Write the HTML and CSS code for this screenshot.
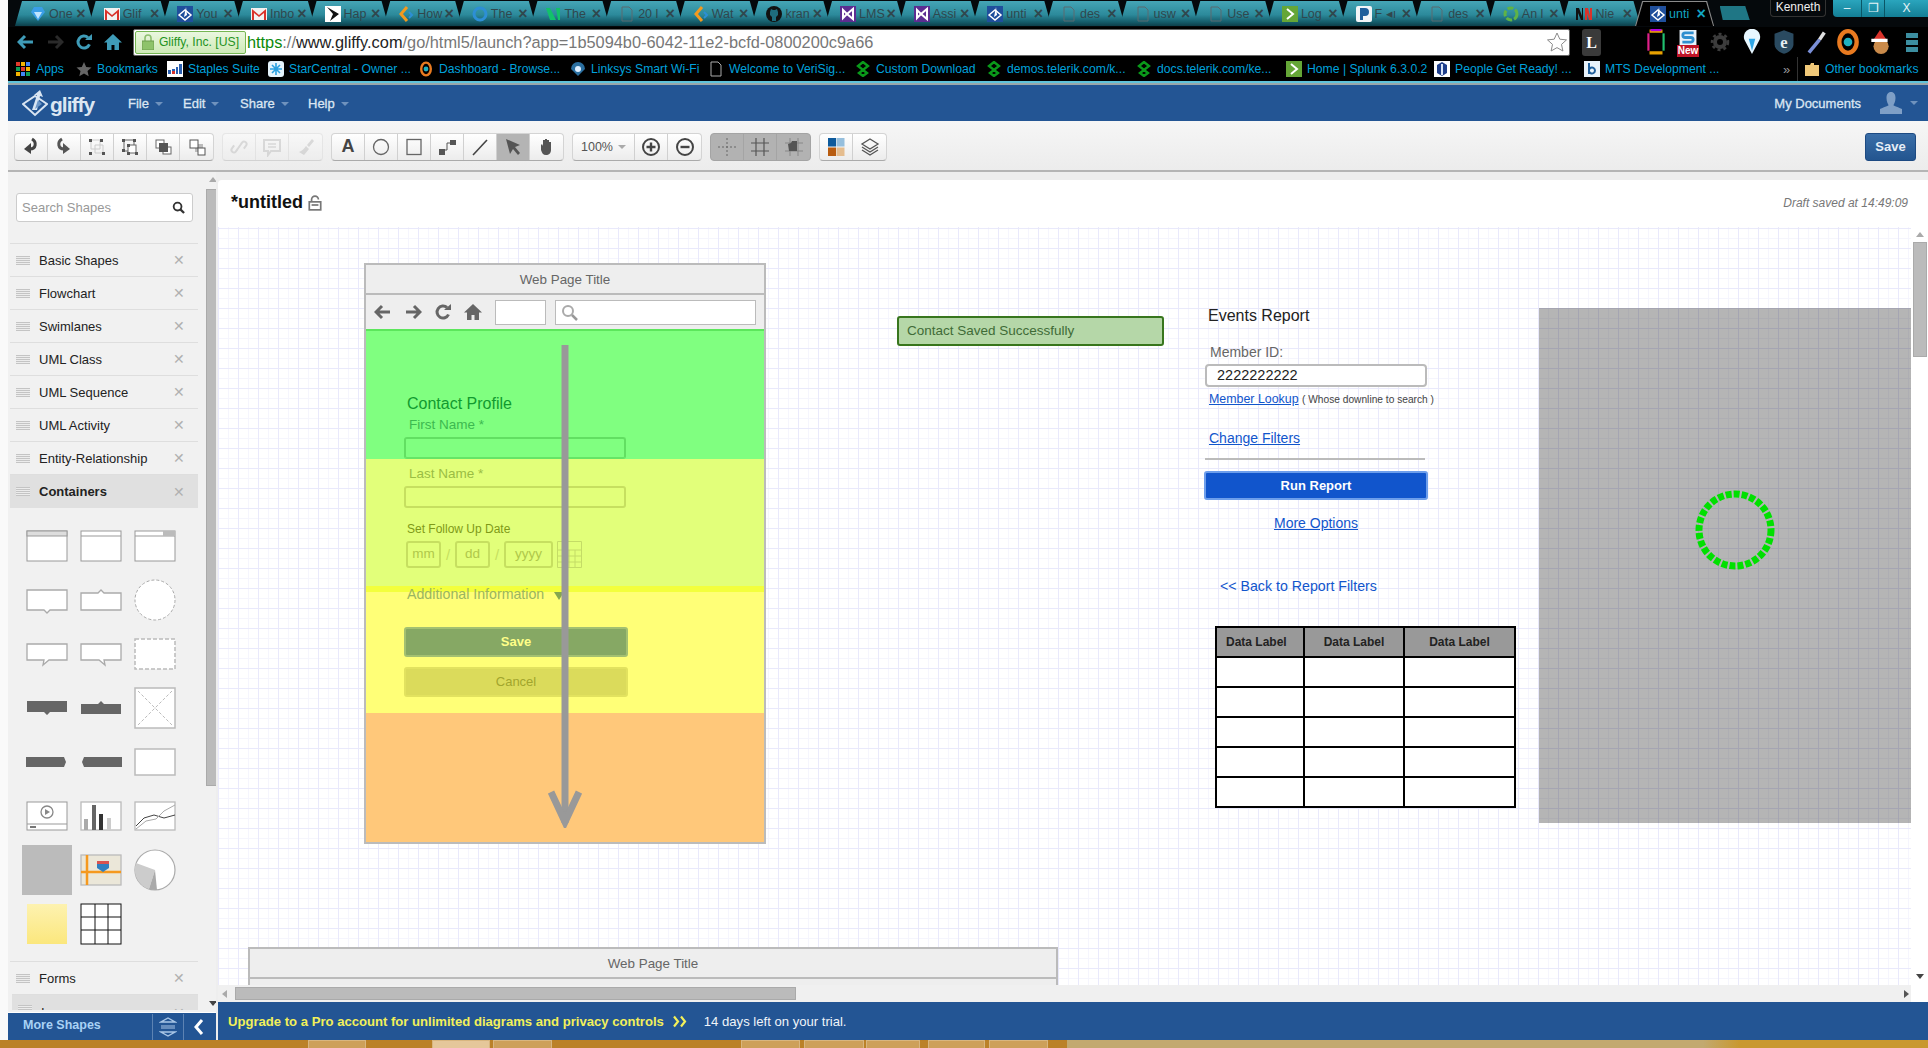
FILE: index.html
```html
<!DOCTYPE html>
<html lang="en">
<head>
    <meta charset="UTF-8">
    <title>Gliffy</title>
    <link rel="stylesheet" href="styles.css">
</head>
<body>
    <!-- icons used more than once -->
    <svg class="defs" width="0" height="0">
        <symbol id="i-gliffy" viewBox="0 0 16 16"><rect width="16" height="16" fill="#1f4f9c"/><path d="M2 9l6-5 6 5-6 5z" fill="none" stroke="#fff" stroke-width="1.5"/><path d="M7 11l2-10 1 8z" fill="#fff"/></symbol>
        <symbol id="i-gmail" viewBox="0 0 16 16"><rect y="2" width="16" height="12" fill="#f2f2f2"/><path d="M1 14V3l7 6 7-6v11h-2V7L8 11 3 7v7z" fill="#d9332b"/></symbol>
        <symbol id="i-doc" viewBox="0 0 16 16"><path d="M3 1h7l3 3v11H3z" fill="none" stroke="#5a6a70"/></symbol>
        <symbol id="i-code" viewBox="0 0 16 16"><path d="M9 1L3 8l6 7" fill="none" stroke="#f29a1f" stroke-width="3"/><path d="M11 6l3 3-3 3" fill="none" stroke="#2d8fd5" stroke-width="2"/></symbol>
        <symbol id="i-vs" viewBox="0 0 16 16"><rect width="16" height="16" fill="#5c2d91"/><path d="M3 4l4 4-4 4zM13 3v10L7 8z" fill="none" stroke="#fff" stroke-width="2"/></symbol>
        <symbol id="i-telerik" viewBox="0 0 16 16"><path d="M8 1L3 5l5 4 5-4zM8 9l-4 3 4 3 4-3z" fill="none" stroke="#0a9a1a" stroke-width="2.4"/></symbol>
        <symbol id="i-splunk" viewBox="0 0 16 16"><rect width="16" height="16" fill="#65a637"/><path d="M5 3l6 5-6 5" fill="none" stroke="#fff" stroke-width="2"/></symbol>
        <symbol id="i-back" viewBox="0 0 18 18"><path d="M8 3L2 9l6 6M2 9h14" fill="none" stroke="currentColor" stroke-width="3"/></symbol>
        <symbol id="i-fwd" viewBox="0 0 18 18"><path d="M10 3l6 6-6 6M16 9H2" fill="none" stroke="currentColor" stroke-width="3"/></symbol>
        <symbol id="i-reload" viewBox="0 0 18 18"><path d="M14.5 11.5A6 6 0 1 1 13 4.5" fill="none" stroke="currentColor" stroke-width="3"/><path d="M10 7h7V1z" fill="currentColor"/></symbol>
        <symbol id="i-home" viewBox="0 0 18 18"><path d="M9 1L0 9.5h3V17h4.500v-5h3v5H15V9.500h3z" fill="currentColor"/></symbol>
    </svg>

    <div class="window">
        <div class="tabstrip">
            <div class="tabs">
                <div class="tab"><svg class="fav" viewBox="0 0 16 16"><path d="M8 15L1 6l3-5h8l3 5z" fill="#3a9fe8"/><path d="M4 6h8L8 13z" fill="#bfe4ff"/></svg><span class="tab-name">One</span><span class="tab-x">×</span></div>
                <div class="tab"><svg class="fav"><use href="#i-gmail"/></svg><span class="tab-name">Glif</span><span class="tab-x">×</span></div>
                <div class="tab"><svg class="fav"><use href="#i-gliffy"/></svg><span class="tab-name">You</span><span class="tab-x">×</span></div>
                <div class="tab"><svg class="fav"><use href="#i-gmail"/></svg><span class="tab-name">Inbo</span><span class="tab-x">×</span></div>
                <div class="tab"><svg class="fav" viewBox="0 0 16 16"><rect width="16" height="16" fill="#fff"/><path d="M2 1l12 7-9 7 3-7z" fill="#111"/></svg><span class="tab-name">Hap</span><span class="tab-x">×</span></div>
                <div class="tab"><svg class="fav"><use href="#i-code"/></svg><span class="tab-name">How</span><span class="tab-x">×</span></div>
                <div class="tab"><svg class="fav" viewBox="0 0 16 16"><circle cx="8" cy="8" r="6" fill="none" stroke="#2d8fd5" stroke-width="3"/></svg><span class="tab-name">The</span><span class="tab-x">×</span></div>
                <div class="tab"><svg class="fav" viewBox="0 0 16 16"><path d="M1 2h4l6 12H5zM11 2h4v12h-2z" fill="#12c26a"/></svg><span class="tab-name">The</span><span class="tab-x">×</span></div>
                <div class="tab"><svg class="fav"><use href="#i-doc"/></svg><span class="tab-name">20 l</span><span class="tab-x">×</span></div>
                <div class="tab"><svg class="fav"><use href="#i-code"/></svg><span class="tab-name">Wat</span><span class="tab-x">×</span></div>
                <div class="tab"><svg class="fav" viewBox="0 0 16 16"><circle cx="8" cy="8" r="8" fill="#111"/><path d="M4 6l1-3 2 1h2l2-1 1 3v3l-2 2v4H6v-4L4 9z" fill="#1e6c7d"/></svg><span class="tab-name">kran</span><span class="tab-x">×</span></div>
                <div class="tab"><svg class="fav"><use href="#i-vs"/></svg><span class="tab-name">LMS</span><span class="tab-x">×</span></div>
                <div class="tab"><svg class="fav"><use href="#i-vs"/></svg><span class="tab-name">Assi</span><span class="tab-x">×</span></div>
                <div class="tab"><svg class="fav"><use href="#i-gliffy"/></svg><span class="tab-name">unti</span><span class="tab-x">×</span></div>
                <div class="tab"><svg class="fav"><use href="#i-doc"/></svg><span class="tab-name">des</span><span class="tab-x">×</span></div>
                <div class="tab"><svg class="fav"><use href="#i-doc"/></svg><span class="tab-name">usw</span><span class="tab-x">×</span></div>
                <div class="tab"><svg class="fav"><use href="#i-doc"/></svg><span class="tab-name">Use</span><span class="tab-x">×</span></div>
                <div class="tab"><svg class="fav"><use href="#i-splunk"/></svg><span class="tab-name">Log</span><span class="tab-x">×</span></div>
                <div class="tab"><svg class="fav" viewBox="0 0 16 16"><rect width="16" height="16" rx="2" fill="#f2f5f8"/><path d="M4 14V2h5a3.500 3.500 0 0 1 0 8H7v4z" fill="#1f5f9c"/></svg><span class="tab-name">F ◂ı</span><span class="tab-x">×</span></div>
                <div class="tab"><svg class="fav"><use href="#i-doc"/></svg><span class="tab-name">des</span><span class="tab-x">×</span></div>
                <div class="tab"><svg class="fav" viewBox="0 0 16 16"><circle cx="8" cy="8" r="6" fill="none" stroke="#5fb346" stroke-width="3" stroke-dasharray="6 2"/></svg><span class="tab-name">An l</span><span class="tab-x">×</span></div>
                <div class="tab"><svg class="fav" viewBox="0 0 16 16"><path d="M0 2h3l3 8V2h1v12H5L2 7v7H0z" fill="#111"/><path d="M9 2h3l2 8V2h2v12h-3l-2-7v7H9z" fill="#d9332b"/></svg><span class="tab-name">Nie</span><span class="tab-x">×</span></div>
                <div class="tab tab-active"><svg class="fav"><use href="#i-gliffy"/></svg><span class="tab-name">unti</span><span class="tab-x">×</span></div>
            </div>
            <div class="tab-new"></div>
            <div class="user-chip">Kenneth</div>
            <div class="win-btns">
                <span class="win-btn win-min">–</span>
                <span class="win-btn win-max">❐</span>
                <span class="win-btn win-close">X</span>
            </div>
        </div>

        <div class="addr-row">
            <svg class="nav-ic nav-on"><use href="#i-back"/></svg>
            <svg class="nav-ic nav-off"><use href="#i-fwd"/></svg>
            <svg class="nav-ic nav-on"><use href="#i-reload"/></svg>
            <svg class="nav-ic nav-on"><use href="#i-home"/></svg>
            <div class="addr">
                <div class="sec-chip">
                    <svg class="lock" viewBox="0 0 12 16"><path d="M3 7V4a3 3 0 0 1 6 0v3" fill="none" stroke="#8fbf70" stroke-width="1.600"/><rect y="7" width="12" height="9" fill="#8ec36a" stroke="#6d9e4c"/></svg>
                    <span>Gliffy, Inc. [US]</span>
                </div>
                <div class="url"><span class="url-https">https</span>://<span class="url-host">www.gliffy.com</span>/go/html5/launch?app=1b5094b0-6042-11e2-bcfd-0800200c9a66</div>
                <svg class="url-star" viewBox="0 0 20 20"><path d="M10 1l2.800 6.200 6.700.7-5 4.500 1.400 6.600L10 15.600 4.100 19l1.400-6.600-5-4.500 6.700-.7z" fill="#fff" stroke="#8a8a8a"/></svg>
            </div>
            <span class="ext-l">L</span>
            <div class="exts">
                <svg class="ext" viewBox="0 0 18 24"><path d="M3 2h12M3 22h12" stroke="#e8a100" stroke-width="3"/><path d="M4 1h10" stroke="#b400e0" stroke-width="2"/><path d="M2 4v16" stroke="#e0208a" stroke-width="2"/><path d="M16 4v16" stroke="#20c070" stroke-width="2"/></svg>
                <div class="ext-new"><svg viewBox="0 0 18 16"><rect width="18" height="16" fill="#e8f2fa"/><path d="M15 3H6a2.500 2.500 0 0 0 0 5h6a2.500 2.500 0 0 1 0 5H3" fill="none" stroke="#2f8fd0" stroke-width="3"/></svg><span>New</span></div>
                <svg class="ext" viewBox="-4 -4 26 26"><circle cx="9" cy="9" r="5" fill="none" stroke="#3c3c3c" stroke-width="4"/><circle cx="9" cy="9" r="8" fill="none" stroke="#3c3c3c" stroke-width="2.500" stroke-dasharray="3 3"/></svg>
                <svg class="ext" viewBox="0 0 18 24"><path d="M9 23L2 10a7.500 7.500 0 1 1 14 0z" fill="#e8f7ff"/><path d="M9 20L6 9h6z" fill="#2fa6e6"/></svg>
                <svg class="ext" viewBox="0 0 18 22"><path d="M9 1l8 3v9c0 4-4 7-8 8-4-1-8-4-8-8V4z" fill="#2a4a60"/><text x="9" y="16" class="ext-e">e</text></svg>
                <svg class="ext" viewBox="0 0 18 22"><path d="M3 20l9-11" stroke="#7a8fd8" stroke-width="3"/><path d="M12 9l4-6" stroke="#e0e0e0" stroke-width="3"/></svg>
                <svg class="ext" viewBox="0 0 20 24"><ellipse cx="10" cy="12" rx="8" ry="10" fill="none" stroke="#e87a20" stroke-width="4"/><circle cx="10" cy="12" r="4" fill="#1fb0c0"/></svg>
                <svg class="ext" viewBox="0 0 20 24"><path d="M4 10L10 1l6 9z" fill="#d9332b"/><circle cx="11" cy="16" r="7" fill="#c98a4a"/><rect x="2" y="9" width="15" height="3" fill="#fff"/></svg>
                <div class="ext-menu"><i></i><i></i><i></i></div>
            </div>
        </div>

        <div class="bookmarks">
            <span class="bm"><svg class="apps-ic" viewBox="0 0 14 14"><path d="M0 0h4v4H0z" fill="#e0392b"/><path d="M5 0h4v4H5z" fill="#f4b400"/><path d="M10 0h4v4h-4z" fill="#4285f4"/><path d="M0 5h4v4H0z" fill="#0f9d58"/><path d="M5 5h4v4H5z" fill="#e0392b"/><path d="M10 5h4v4h-4z" fill="#f4b400"/><path d="M0 10h4v4H0z" fill="#f4b400"/><path d="M5 10h4v4H5z" fill="#4285f4"/><path d="M10 10h4v4h-4z" fill="#0f9d58"/></svg>Apps</span>
            <span class="bm"><svg class="bm-ic" viewBox="0 0 16 16"><path d="M8 1l2.200 5 5.300.5-4 3.600 1.200 5.200L8 12.600l-4.700 2.700 1.200-5.200-4-3.600L5.800 6z" fill="#666"/></svg>Bookmarks</span>
            <span class="bm"><svg class="bm-ic" viewBox="0 0 16 16"><rect width="16" height="16" fill="#fff"/><path d="M1 13V9h3v4zM5 13V8h3v5zM9 13V6h2v7zM12 13V3h3v10z" fill="#2a5fb0"/><path d="M5 13V10h3v3z" fill="#d9332b"/></svg>Staples Suite</span>
            <span class="bm"><svg class="bm-ic" viewBox="0 0 16 16"><rect width="16" height="16" rx="3" fill="#e6f4fc"/><path d="M8 2v12M2 8h12M4 4l8 8M12 4l-8 8" stroke="#2aa0e0" stroke-width="1.600"/></svg>StarCentral - Owner ...</span>
            <span class="bm"><svg class="bm-ic" viewBox="0 0 16 20"><ellipse cx="8" cy="10" rx="6" ry="8" fill="none" stroke="#e87a20" stroke-width="3"/><circle cx="8" cy="10" r="3" fill="#1fb0c0"/></svg>Dashboard - Browse...</span>
            <span class="bm"><svg class="bm-ic" viewBox="0 0 16 16"><path d="M1 8a7 7 0 0 1 14 0l-7 7z" fill="#2a6fa0"/><circle cx="8" cy="8" r="3" fill="#dfefff"/></svg>Linksys Smart Wi-Fi</span>
            <span class="bm"><svg class="bm-ic" viewBox="0 0 16 16"><path d="M3 1h7l3 3v11H3z" fill="none" stroke="#aaa"/></svg>Welcome to VeriSig...</span>
            <span class="bm"><svg class="bm-ic"><use href="#i-telerik"/></svg>Custom Download</span>
            <span class="bm"><svg class="bm-ic"><use href="#i-telerik"/></svg>demos.telerik.com/k...</span>
            <span class="bm"><svg class="bm-ic"><use href="#i-telerik"/></svg>docs.telerik.com/ke...</span>
            <span class="bm"><svg class="bm-ic"><use href="#i-splunk"/></svg>Home | Splunk 6.3.0.2</span>
            <span class="bm"><svg class="bm-ic" viewBox="0 0 16 16"><rect width="16" height="16" fill="#fff"/><path d="M3 4l5-3 5 3v8l-5 3-5-3z" fill="#1f3f8c"/><path d="M7 3h2v11H7z" fill="#d8e4f8"/></svg>People Get Ready! ...</span>
            <span class="bm"><svg class="bm-ic" viewBox="0 0 16 16"><rect width="16" height="16" fill="#e8f2fa"/><path d="M5 2v11M5 9a3 3 0 1 1 0 1" fill="none" stroke="#1f5f9c" stroke-width="2"/></svg>MTS Development ...</span>
            <span class="bm-more">»</span>
            <span class="bm bm-other"><svg class="bm-ic" viewBox="0 0 16 16"><path d="M1 4h5l1-2h3v2h5v11H1z" fill="#f0c878"/></svg>Other bookmarks</span>
        </div>
        <div class="chrome-line"></div>

        <header class="topbar">
            <div class="logo">
                <svg class="logo-mark" viewBox="0 0 26 28"><path d="M1 15L13 7l12 8-12 11z" fill="none" stroke="#d9e5f2" stroke-width="2"/><path d="M10 21L15 6l-3 0 6-5 3 7-3-1-3 14z" fill="#d9e5f2"/><path d="M13 20l3-9 4 4z" fill="#6d97c7"/></svg>
                <span class="logo-text">gliffy</span>
            </div>
            <nav class="menu">
                <span class="menu-item menu-file">File</span>
                <span class="menu-item menu-edit">Edit</span>
                <span class="menu-item menu-share">Share</span>
                <span class="menu-item">Help</span>
            </nav>
            <span class="my-docs">My Documents</span>
            <svg class="avatar" viewBox="0 0 22 24"><path d="M11 1c3 0 4.500 2.500 4.500 6s-1.500 6-2 7 6 2.500 8.500 4v5H0v-5c2.500-1.500 9-3 8.500-4s-2-3.500-2-7S8 1 11 1z" fill="#7f9fc6"/></svg>
            <span class="caret avatar-caret"></span>
        </header>

        <div class="toolbar">
            <div class="tb-group">
                <span class="tb-btn"><svg viewBox="0 0 20 20"><path d="M11 2c5 3 4 10-2 10" fill="none" stroke="#444" stroke-width="3"/><path d="M10 6v11l-7-5z" fill="#444"/></svg></span>
                <span class="tb-btn"><svg viewBox="0 0 20 20"><path d="M8 2C3 5 4 12 10 12" fill="none" stroke="#555" stroke-width="3"/><path d="M9 6v11l7-5z" fill="#555"/></svg></span>
                <span class="tb-btn"><svg viewBox="0 0 20 20"><path d="M4 3h9v9H4zM8 8h8v8H8z" fill="none" stroke="#ccc"/><path d="M2 2h3v3H2zM13 2h3v3h-3zM2 15h3v3H2zM15 15h3v3h-3z" fill="#555"/></svg></span>
                <span class="tb-btn"><svg viewBox="0 0 20 20"><path d="M4 3h10v11H4z" fill="none" stroke="#666"/><rect x="8" y="8" width="8" height="8" fill="#fff" stroke="#666"/><path d="M2 2h3v3H2zM13 2h3v3h-3zM2 12h3v3H2zM7 7h3v3H7zM15 15h3v3h-3zM7 15h3v3H7z" fill="#555"/></svg></span>
                <span class="tb-btn"><svg viewBox="0 0 20 20"><rect x="3" y="3" width="8" height="8" fill="#fff" stroke="#666"/><rect x="10" y="10" width="8" height="7" fill="#fff" stroke="#666"/><rect x="6" y="6" width="9" height="9" fill="#555"/></svg></span>
                <span class="tb-btn"><svg viewBox="0 0 20 20"><rect x="8" y="7" width="8" height="8" fill="#bbb"/><rect x="3" y="3" width="8" height="8" fill="#fff" stroke="#555"/><rect x="11" y="11" width="7" height="7" fill="#fff" stroke="#555"/></svg></span>
            </div>
            <div class="tb-group tb-disabled">
                <span class="tb-btn"><svg viewBox="0 0 20 20"><path d="M8 12l-2 2a2.500 2.500 0 0 1-3.500-3.500l3-3M12 8l2-2a2.500 2.500 0 0 1 3.500 3.500l-3 3M7 13l6-6" fill="none" stroke="#888" stroke-width="2" transform="rotate(-10 10 10)"/></svg></span>
                <span class="tb-btn"><svg viewBox="0 0 20 20"><path d="M2 3h16v11h-9l-3 4v-4H2z" fill="none" stroke="#888" stroke-width="2"/><path d="M6 7h8M6 10h8" stroke="#888" stroke-width="1.500"/></svg></span>
                <span class="tb-btn"><svg viewBox="0 0 20 20"><path d="M11 8l5-6 2 2-5 6zM10 9l3 3-5 6-5-3c3-1 5-3 7-6z" fill="#888"/></svg></span>
            </div>
            <div class="tb-group">
                <span class="tb-btn tb-letter">A</span>
                <span class="tb-btn"><svg viewBox="0 0 20 20"><circle cx="10" cy="10" r="7.500" fill="none" stroke="#666" stroke-width="1.300"/></svg></span>
                <span class="tb-btn"><svg viewBox="0 0 20 20"><rect x="3" y="2.500" width="14" height="15" fill="none" stroke="#666" stroke-width="1.300"/></svg></span>
                <span class="tb-btn"><svg viewBox="0 0 20 20"><path d="M2 12h6v6H2zM13 3h6v5h-6z" fill="#555"/><path d="M5 13h5V6h4" fill="none" stroke="#555"/></svg></span>
                <span class="tb-btn"><svg viewBox="0 0 20 20"><path d="M3 18L17 3" stroke="#444" stroke-width="1.600"/></svg></span>
                <span class="tb-btn tb-on"><svg viewBox="0 0 20 20"><path d="M3 2l14 6-5 2 5 6-2 2-5-6-3 5z" fill="#555"/></svg></span>
                <span class="tb-btn"><svg viewBox="0 0 20 20"><path d="M4 8l1-1 1 2V3h2v5V2h2v6-5h2v6V5h2v8c0 3-2 5-5 5-3 0-4-2-5-5z" fill="#555"/></svg></span>
            </div>
            <div class="tb-group">
                <span class="tb-btn tb-zoom">100%<span class="caret zoom-caret"></span></span>
                <span class="tb-btn"><svg viewBox="0 0 20 20"><circle cx="10" cy="10" r="8" fill="none" stroke="#444" stroke-width="2"/><path d="M5.500 10h9M10 5.500v9" stroke="#444" stroke-width="2.400"/></svg></span>
                <span class="tb-btn"><svg viewBox="0 0 20 20"><circle cx="10" cy="10" r="8" fill="none" stroke="#444" stroke-width="2"/><path d="M5.500 10h9" stroke="#444" stroke-width="2.400"/></svg></span>
            </div>
            <div class="tb-group tb-dark">
                <span class="tb-btn"><svg viewBox="0 0 20 20"><path d="M1 10h18M10 1v18" stroke="#666" stroke-dasharray="2 2"/></svg></span>
                <span class="tb-btn"><svg viewBox="0 0 20 20"><path d="M1 6h18M1 14h18M6 1v18M14 1v18" stroke="#555" stroke-width="1.200"/></svg></span>
                <span class="tb-btn"><svg viewBox="0 0 20 20"><path d="M1 6h18M1 14h18M6 1v18M14 1v18" stroke="#888"/><path d="M4 7l3-1 1-2h5v10H5z" fill="#555"/></svg></span>
            </div>
            <div class="tb-group">
                <span class="tb-btn"><svg viewBox="0 0 20 20"><rect x="2" y="1" width="8" height="8.500" fill="#0d5a9c"/><rect x="10.500" y="1" width="8" height="8.500" fill="#96bfdd"/><rect x="2" y="10.500" width="8" height="8.500" fill="#b85c10"/><rect x="10.500" y="10.500" width="8" height="8.500" fill="#e5bd8f"/></svg></span>
                <span class="tb-btn"><svg viewBox="0 0 20 20"><path d="M10 2l8 5-8 5-8-5zM2 10l8 5 8-5M2 13l8 5 8-5" fill="none" stroke="#555" stroke-width="1.300"/></svg></span>
            </div>
            <button class="save-btn">Save</button>
        </div>

        <div class="workspace">
            <aside class="sidebar">
                <div class="side-panel">
                    <div class="side-list">
                        <div class="search">
                            <span>Search Shapes</span>
                            <svg viewBox="0 0 14 14"><circle cx="6" cy="6" r="4.200" fill="none" stroke="#333" stroke-width="2"/><path d="M9 9l4 4" stroke="#333" stroke-width="2.400"/></svg>
                        </div>
                        <div class="lib-row"><span class="grip"></span>Basic Shapes<span class="lib-x">✕</span></div>
                        <div class="lib-row"><span class="grip"></span>Flowchart<span class="lib-x">✕</span></div>
                        <div class="lib-row"><span class="grip"></span>Swimlanes<span class="lib-x">✕</span></div>
                        <div class="lib-row"><span class="grip"></span>UML Class<span class="lib-x">✕</span></div>
                        <div class="lib-row"><span class="grip"></span>UML Sequence<span class="lib-x">✕</span></div>
                        <div class="lib-row"><span class="grip"></span>UML Activity<span class="lib-x">✕</span></div>
                        <div class="lib-row"><span class="grip"></span>Entity-Relationship<span class="lib-x">✕</span></div>
                        <div class="lib-row lib-open"><span class="grip"></span>Containers<span class="lib-x">✕</span></div>
                        <div class="shapes">
                            <svg viewBox="0 0 54 54"><rect x="7" y="12" width="40" height="30" fill="#fff" stroke="#999"/><rect x="7" y="12" width="40" height="5" fill="#ddd" stroke="#999"/></svg>
                            <svg viewBox="0 0 54 54"><rect x="7" y="12" width="40" height="30" fill="#fff" stroke="#999"/><path d="M7 17h40" stroke="#999"/></svg>
                            <svg viewBox="0 0 54 54"><rect x="7" y="12" width="40" height="30" fill="#fff" stroke="#999"/><path d="M7 17h40" stroke="#999"/><rect x="35" y="12" width="12" height="5" fill="#bbb"/></svg>
                            <svg viewBox="0 0 54 54"><path d="M7 17h40v20H30l-3 3-3-3H7z" fill="#fff" stroke="#aaa" stroke-width="1.300"/></svg>
                            <svg viewBox="0 0 54 54"><path d="M7 20h17l3-3 3 3h17v17H7z" fill="#fff" stroke="#aaa" stroke-width="1.300"/></svg>
                            <svg viewBox="0 0 54 54"><circle cx="27" cy="27" r="20" fill="#fff" stroke="#aaa" stroke-dasharray="3 2"/></svg>
                            <svg viewBox="0 0 54 54"><path d="M7 17h40v16H29l-6 5 1-5H7z" fill="#fff" stroke="#aaa" stroke-width="1.300"/></svg>
                            <svg viewBox="0 0 54 54"><path d="M7 17h40v16H30l1 5-6-5H7z" fill="#fff" stroke="#aaa" stroke-width="1.300"/></svg>
                            <svg viewBox="0 0 54 54"><rect x="7" y="12" width="40" height="30" fill="#fff" stroke="#bbb" stroke-width="1.500" stroke-dasharray="4 2"/></svg>
                            <svg viewBox="0 0 54 54"><path d="M7 20h40v11H30l-3 3-3-3H7z" fill="#666"/></svg>
                            <svg viewBox="0 0 54 54"><path d="M7 23h17l3-3 3 3h17v10H7z" fill="#666"/></svg>
                            <svg viewBox="0 0 54 54"><rect x="7" y="7" width="40" height="40" fill="#fff" stroke="#bbb" stroke-width="1.500"/><path d="M10 10l34 34M44 10L10 44" stroke="#bbb" stroke-dasharray="3 2"/></svg>
                            <svg viewBox="0 0 54 54"><path d="M6 22h38l2 5-2 5H6z" fill="#666"/></svg>
                            <svg viewBox="0 0 54 54"><path d="M10 22h38v10H10l-2-5z" fill="#666"/></svg>
                            <svg viewBox="0 0 54 54"><rect x="7" y="14" width="40" height="26" fill="#fff" stroke="#bbb" stroke-width="1.500"/></svg>
                            <svg viewBox="0 0 54 54"><rect x="7" y="13" width="40" height="28" fill="#fff" stroke="#999"/><path d="M7 35h40" stroke="#999"/><circle cx="27" cy="23" r="6" fill="none" stroke="#888" stroke-width="1.300"/><path d="M25 20l5 3-5 3z" fill="#888"/><path d="M10 38h6" stroke="#777" stroke-width="2"/></svg>
                            <svg viewBox="0 0 54 54"><rect x="7" y="13" width="40" height="28" fill="#fff" stroke="#bbb" stroke-width="1.300"/><rect x="10" y="30" width="4" height="11" fill="#aaa"/><rect x="18" y="16" width="4" height="25" fill="#666"/><rect x="25" y="25" width="4" height="16" fill="#333"/><rect x="33" y="29" width="4" height="12" fill="#ccc"/></svg>
                            <svg viewBox="0 0 54 54"><rect x="7" y="13" width="40" height="28" fill="#fff" stroke="#bbb" stroke-width="1.300"/><path d="M8 37l8-8 10-3 10 3 11-3" fill="none" stroke="#444"/><path d="M8 40l10-8 10-2 8-8 11-6" fill="none" stroke="#aaa"/></svg>
                            <svg viewBox="0 0 54 54"><rect x="2" y="2" width="50" height="50" fill="#bbb"/></svg>
                            <svg viewBox="0 0 54 54"><rect x="7" y="12" width="40" height="30" fill="#ebe7d9" stroke="#bbb" stroke-width="1.300"/><path d="M13 12v30M7 29h40" stroke="#f5991f" stroke-width="2.500"/><path d="M23 20h12v5l-6 4-6-4z" fill="#2f7fc0"/><rect x="23" y="18" width="12" height="3" fill="#d9534f"/></svg>
                            <svg viewBox="0 0 54 54"><circle cx="27" cy="27" r="20" fill="#fff" stroke="#aaa" stroke-width="1.200"/><path d="M27 27L8 20A20 20 0 0 0 21 46z" fill="#ccc"/><path d="M27 27L21 46A20 20 0 0 0 29 47z" fill="#aaa"/></svg>
                            <svg viewBox="0 0 54 54"><defs><linearGradient id="note" x1="0" y1="0" x2="0" y2="1"><stop offset="0" stop-color="#fdf2b0"/><stop offset="1" stop-color="#fbe77d"/></linearGradient></defs><rect x="7" y="7" width="40" height="40" fill="url(#note)"/></svg>
                            <svg viewBox="0 0 54 54"><rect x="7" y="7" width="40" height="40" fill="#fff" stroke="#111"/><path d="M21 7v40M34 7v40M7 20h40M7 33h40" stroke="#111"/></svg>
                        </div>
                        <div class="lib-row lib-forms"><span class="grip"></span>Forms<span class="lib-x">✕</span></div>
                        <div class="lib-row lib-open lib-cut"><span class="grip"></span>Images<span class="lib-x">✕</span></div>
                    </div>
                    <div class="side-scroll">
                        <span class="arrow-up"></span>
                        <span class="side-thumb"></span>
                        <span class="arrow-down"></span>
                    </div>
                </div>
                <div class="side-foot">
                    <span class="more-shapes">More Shapes</span>
                    <span class="foot-btn"><svg viewBox="0 0 18 20"><path d="M2 9h14M2 11h14" stroke="#a9c6e6" stroke-width="1.200"/><path d="M2 5h14L9 1zM2 15h14l-7 4z" fill="none" stroke="#a9c6e6" stroke-width="1.400"/></svg></span>
                    <span class="foot-btn"><svg viewBox="0 0 18 20"><path d="M12 3l-6 7 6 7" fill="none" stroke="#fff" stroke-width="3"/></svg></span>
                </div>
            </aside>

            <main class="main">
                <div class="doc-head">
                    <span class="doc-title">*untitled</span>
                    <svg class="doc-lock" viewBox="0 0 12 14"><path d="M3 6V4a3 3 0 0 1 6 0" fill="none" stroke="#777" stroke-width="1.500"/><rect x="1" y="6" width="10" height="7" fill="#fff" stroke="#777" stroke-width="1.500"/><rect x="3" y="8" width="6" height="1.500" fill="#777"/></svg>
                    <span class="doc-saved">Draft saved at 14:49:09</span>
                </div>
                <div class="stage">
                    <div class="canvas">
                        <div class="wire wire-main">
                            <div class="wire-title">Web Page Title</div>
                            <div class="wire-bar">
                                <svg class="wire-nav"><use href="#i-back"/></svg>
                                <svg class="wire-nav"><use href="#i-fwd"/></svg>
                                <svg class="wire-nav"><use href="#i-reload"/></svg>
                                <svg class="wire-nav"><use href="#i-home"/></svg>
                                <span class="wire-url"></span>
                                <span class="wire-search"><svg viewBox="0 0 18 18"><circle cx="7" cy="7" r="5" fill="none" stroke="#aaa" stroke-width="2"/><path d="M11 11l5 5" stroke="#999" stroke-width="2.500"/></svg></span>
                            </div>
                            <div class="bands">
                                <div class="band band-green"></div>
                                <div class="band band-lime"></div>
                                <div class="band band-yellow"></div>
                                <div class="band band-orange"></div>
                                <div class="contact">
                                    <div class="contact-title">Contact Profile</div>
                                    <div class="contact-label label-green">First Name *</div>
                                    <div class="contact-input input-green"></div>
                                    <div class="contact-label label-lime">Last Name *</div>
                                    <div class="contact-input input-lime"></div>
                                    <div class="date-label">Set Follow Up Date</div>
                                    <div class="date-row">
                                        <span class="date-box date-mm">mm</span><span class="date-sep">/</span>
                                        <span class="date-box date-dd">dd</span><span class="date-sep">/</span>
                                        <span class="date-box date-yy">yyyy</span>
                                        <svg class="date-cal" viewBox="0 0 25 27"><path d="M.5.5h24v26H.5zM0 9h25M0 15h25M0 21h25M6 9v18M12 9v18M18 9v18" fill="none" stroke="#c4dc66"/></svg>
                                    </div>
                                    <div class="more-info">Additional Information<span class="more-tri"></span></div>
                                    <div class="form-btn form-save">Save</div>
                                    <div class="form-btn form-cancel">Cancel</div>
                                </div>
                            </div>
                            <svg class="flow-arrow" viewBox="0 0 34 483"><path d="M17 0v478" stroke="#999" stroke-width="7"/><path d="M3 447l14 30 14-30" fill="none" stroke="#999" stroke-width="7"/></svg>
                        </div>

                        <div class="saved-msg">Contact Saved Successfully</div>

                        <div class="report">
                            <div class="report-title">Events Report</div>
                            <div class="report-label">Member ID:</div>
                            <div class="report-input">2222222222</div>
                            <div class="lookup"><a class="link">Member Lookup</a> <span class="lookup-note">( Whose downline to search )</span></div>
                            <div class="filters"><a class="link">Change Filters</a></div>
                            <div class="report-rule"></div>
                            <div class="run-btn">Run Report</div>
                            <div class="more-opts"><a class="link">More Options</a></div>
                            <div class="back-link">&lt;&lt; Back to Report Filters</div>
                        </div>

                        <table class="data">
                            <tr><th class="th-first">Data Label</th><th>Data Label</th><th>Data Label</th></tr>
                            <tr><td></td><td></td><td></td></tr>
                            <tr><td></td><td></td><td></td></tr>
                            <tr><td></td><td></td><td></td></tr>
                            <tr><td></td><td></td><td></td></tr>
                            <tr><td></td><td></td><td></td></tr>
                        </table>

                        <div class="grey-box"></div>
                        <svg class="spinner" viewBox="0 0 80 80"><circle cx="40" cy="40" r="36" fill="none" stroke="#00e000" stroke-width="7" stroke-dasharray="6 2"/></svg>

                        <div class="wire wire-second">
                            <div class="wire-title">Web Page Title</div>
                        </div>
                    </div>
                    <div class="vscroll">
                        <span class="arrow-up"></span>
                        <span class="v-thumb"></span>
                        <span class="arrow-down"></span>
                    </div>
                </div>
                <div class="hscroll">
                    <span class="arrow-left"></span>
                    <span class="h-thumb"></span>
                    <span class="arrow-right"></span>
                </div>
                <div class="promo">
                    <span class="promo-up">Upgrade to a Pro account for unlimited diagrams and privacy controls</span>
                    <svg class="promo-chev" viewBox="0 0 14 12"><path d="M1 1l4 5-4 5M8 1l4 5-4 5" fill="none" stroke="#f2f05a" stroke-width="2.200"/></svg>
                    <span class="promo-days">14 days left on your trial.</span>
                </div>
            </main>
        </div>
    </div>

    <div class="taskbar">
        <span class="task task-a"></span>
        <span class="task task-b"></span>
        <span class="task task-c"></span>
        <span class="task task-d"></span>
        <span class="task task-e"></span>
        <span class="task task-f"></span>
        <span class="task task-g"></span>
        <span class="task task-h"></span>
    </div>
</body>
</html>
```

FILE: styles.css
```css
* {
    box-sizing: border-box;
}

body {
    margin: 0;
    width: 1928px;
    height: 1048px;
    overflow: hidden;
    background-color: #fafafa;
    font-family: "Liberation Sans", Arial, sans-serif;
    display: flex;
    flex-direction: column;
}

.defs {
    position: absolute;
}

.window {
    height: 1040px;
    margin-left: 8px;
    display: flex;
    flex-direction: column;
}

/* browser chrome */
.tabstrip {
    height: 27px;
    background-color: #05090c;
    display: flex;
    padding-left: 7px;
}

.tabs {
    display: grid;
    grid-template-columns: repeat(23, 73.65px);
    height: 25px;
    margin-top: 1px;
}

.tab {
    position: relative;
    width: 79px;
    display: flex;
    align-items: center;
    padding-left: 15px;
    background: linear-gradient(#45a5b6, #2c8a9b 55%, #145a68 85%, #0d3f4a);
    clip-path: polygon(7px 0, 72px 0, 79px 100%, 0 100%);
    font-size: 12.500px;
    color: #30474d;
}

.tab-active {
    background: #8a8a8a;
    color: #12a5c2;
}

.tab-active::before {
    content: "";
    position: absolute;
    inset: 1px 1px 0;
    background-color: #000;
    clip-path: polygon(7px 0, 70px 0, 77px 100%, 0 100%);
}

.fav {
    position: relative;
    width: 16px;
    height: 16px;
    flex-shrink: 0;
}

.tab-name {
    position: relative;
    margin-left: 3px;
    width: 26px;
    white-space: nowrap;
}

.tab-x {
    position: relative;
    width: 12px;
    font-size: 16px;
    font-weight: 700;
    line-height: 1;
    text-align: center;
    color: #30474d;
}

.tab-active .tab-x {
    color: #12a5c2;
}

.tab-new {
    width: 30px;
    height: 14px;
    margin: 6px 0 0 11px;
    background-color: #1f7685;
    clip-path: polygon(0 0, 85% 0, 100% 100%, 10% 100%);
}

.user-chip {
    width: 56px;
    height: 17px;
    margin-left: auto;
    border: 1px solid #333;
    border-top: 0;
    border-radius: 0 0 4px 4px;
    color: #eee;
    font-size: 12px;
    text-align: center;
    line-height: 15px;
}

.win-btns {
    display: flex;
    margin-left: 7px;
}

.win-btn {
    height: 17px;
    background: linear-gradient(#2aa5bd, #137e95);
    color: #e6f4f7;
    text-align: center;
    font-size: 12px;
    line-height: 16px;
    border-right: 1px solid #0a5666;
}

.win-min {
    width: 29px;
    border-radius: 0 0 0 4px;
}

.win-max {
    width: 23px;
}

.win-close {
    width: 43px;
    border-right: 0;
}

.addr-row {
    height: 30px;
    background-color: #000;
    display: flex;
    align-items: center;
    padding-left: 9px;
}

.nav-ic {
    width: 18px;
    height: 18px;
    margin-right: 11px;
}

.nav-on {
    color: #3f9cb8;
}

.nav-off {
    color: #2a2a2a;
}

.addr {
    width: 1440px;
    height: 27px;
    background-color: #fff;
    border: 1px solid #666;
    border-radius: 2px;
    display: flex;
    align-items: center;
    padding-left: 1px;
}

.sec-chip {
    width: 111px;
    height: 23px;
    background: linear-gradient(#eaf7df, #cfeab8);
    border: 1px solid #76b653;
    border-radius: 2px;
    display: flex;
    align-items: center;
    padding-left: 6px;
    color: #25931f;
    font-size: 12.200px;
    white-space: nowrap;
}

.lock {
    width: 12px;
    height: 16px;
    margin-right: 5px;
}

.url {
    margin-left: 1px;
    font-size: 16.350px;
    color: #777;
    white-space: nowrap;
}

.url-https {
    color: #0b8a0b;
}

.url-host {
    color: #222;
}

.url-star {
    width: 20px;
    height: 20px;
    margin-left: auto;
    margin-right: 2px;
}

.ext-l {
    width: 19px;
    height: 27px;
    margin-left: 12px;
    background-color: #3a3a3a;
    border-radius: 3px;
    color: #fff;
    font: 700 16px/27px "Liberation Serif", serif;
    text-align: center;
}

.exts {
    display: flex;
    align-items: center;
    margin-left: 39px;
}

.ext {
    width: 32px;
    height: 26px;
}

.ext-e {
    fill: #e6eef2;
    font: 700 14px "Liberation Serif", serif;
    text-anchor: middle;
}

.ext-new {
    width: 32px;
    height: 30px;
    display: flex;
    flex-direction: column;
    align-items: center;
    margin-top: 6px;
}

.ext-new svg {
    width: 18px;
    height: 15px;
}

.ext-new span {
    background-color: #c01428;
    color: #fff;
    font-size: 10px;
    font-weight: 700;
    line-height: 12px;
    padding: 0 1px;
}

.ext-menu {
    width: 32px;
    display: flex;
    flex-direction: column;
    align-items: center;
    gap: 2px;
}

.ext-menu i {
    width: 12px;
    height: 5px;
    background-color: #3c8ea0;
}

.bookmarks {
    height: 24px;
    background-color: #000;
    display: grid;
    grid-template-columns: 60px 91px 101px 150px 152px 138px 147px 131px 150px 150px 148px 150px 199px 22px 115px;
    align-items: center;
    padding-left: 8px;
}

.bm {
    display: flex;
    align-items: center;
    gap: 5px;
    color: #00a2dc;
    font-size: 12.200px;
    white-space: nowrap;
}

.bm-ic {
    width: 16px;
    height: 16px;
    flex-shrink: 0;
}

.apps-ic {
    width: 14px;
    height: 14px;
    margin-right: 1px;
    flex-shrink: 0;
}

.bm-more {
    color: #999;
    font-size: 13px;
}

.bm-other {
    border-left: 1px solid #333;
    padding-left: 6px;
    height: 24px;
    margin-left: -8px;
    width: 130px;
}

.chrome-line {
    height: 4px;
    background-color: #9aa7aa;
    border-top: 2px solid #5fc3da;
}

/* app header */
.topbar {
    height: 36px;
    background-color: #235594;
    display: flex;
    align-items: center;
}

.logo {
    display: flex;
    align-items: flex-end;
    margin-left: 14px;
    width: 106px;
    height: 28px;
}

.logo-mark {
    width: 26px;
    height: 28px;
}

.logo-text {
    margin-left: 2px;
    color: #dbe6f2;
    font-size: 21px;
    font-weight: 700;
    line-height: 24px;
    letter-spacing: -1px;
}

.menu {
    display: flex;
    flex: 1;
}

.menu-item {
    display: flex;
    align-items: center;
    color: #dbe6f2;
    font-size: 13px;
    -webkit-text-stroke: .3px #dbe6f2;
}

.menu-item::after {
    content: "";
    margin-left: 6px;
    margin-top: 2px;
    border: 4px solid transparent;
    border-top-color: #6f92bd;
    border-bottom: 0;
}

.menu-file {
    width: 55px;
}

.menu-edit {
    width: 57px;
}

.menu-share {
    width: 68px;
}

.my-docs {
    color: #dbe6f2;
    font-size: 13px;
    -webkit-text-stroke: .3px #dbe6f2;
}

.avatar {
    width: 22px;
    height: 24px;
    margin-left: 19px;
}

.caret {
    display: inline-block;
    border: 4px solid transparent;
    border-top-color: #6f92bd;
    border-bottom: 0;
}

.avatar-caret {
    margin: 0 10px 0 8px;
}

/* toolbar */
.toolbar {
    height: 51px;
    background: linear-gradient(#f6f6f6, #ececec);
    display: flex;
    align-items: center;
    gap: 8px;
    padding: 2px 12px 0 6px;
    border-bottom: 2px solid #b5b5b5;
}

.tb-group {
    display: flex;
    height: 28px;
    border: 1px solid #d4d4d4;
    border-bottom-color: #aaa;
    border-radius: 4px;
    background: linear-gradient(#fff, #ececec);
}

.tb-btn {
    width: 33px;
    display: flex;
    align-items: center;
    justify-content: center;
    border-right: 1px solid #d0d0d0;
}

.tb-btn:last-child {
    border-right: 0;
}

.tb-btn svg {
    width: 20px;
    height: 20px;
}

.tb-disabled {
    opacity: .4;
}

.tb-disabled .tb-btn svg {
    opacity: .6;
}

.tb-on {
    background-color: #b4b4b4;
}

.tb-dark {
    background: #b2b2b2;
    border-color: #a4a4a4;
}

.tb-dark .tb-btn {
    border-right-color: #a4a4a4;
}

.tb-letter {
    color: #444;
    font-size: 18px;
    font-weight: 700;
}

.tb-zoom {
    width: 62px;
    color: #555;
    font-size: 12.500px;
    gap: 5px;
}

.zoom-caret {
    border-top-color: #aaa;
}

.save-btn {
    width: 51px;
    height: 28px;
    margin-left: auto;
    padding: 0;
    border: 1px solid #1d4a82;
    border-radius: 3px;
    background: linear-gradient(#3a6ea8, #23558f);
    color: #e6eef6;
    font: 700 13px "Liberation Sans", Arial, sans-serif;
}

/* workspace */
.workspace {
    height: 868px;
    display: flex;
    background-color: #eeeeee;
}

.sidebar {
    width: 208px;
    display: flex;
    flex-direction: column;
}

.side-panel {
    height: 840px;
    display: flex;
    overflow: hidden;
    background-color: #f1f1f1;
}

.side-list {
    width: 192px;
    padding-left: 2px;
}

.search {
    width: 177px;
    height: 29px;
    margin: 21px 0 21px 6px;
    background-color: #fff;
    border: 1px solid #ccc;
    border-radius: 3px;
    display: flex;
    align-items: center;
    justify-content: space-between;
    padding: 0 7px 0 5px;
    color: #999;
    font-size: 13px;
}

.search svg {
    width: 13px;
    height: 13px;
}

.lib-row {
    width: 188px;
    height: 33px;
    border-top: 1px solid #dedede;
    display: flex;
    align-items: center;
    padding-left: 6px;
    color: #222;
    font-size: 13px;
}

.lib-open {
    background-color: #e0e0e0;
    font-weight: 700;
    height: 34px;
}

.grip {
    width: 14px;
    height: 9px;
    margin-right: 9px;
    background: repeating-linear-gradient(#c4c4c4 0 1px, #ececec 0 2px);
}

.lib-x {
    margin-left: auto;
    margin-right: 13px;
    color: #b0b0b0;
    font-size: 14px;
    font-weight: 400;
}

.shapes {
    display: grid;
    grid-template-columns: repeat(3, 54px);
    grid-auto-rows: 54px;
    margin: 11px 0 10px 10px;
}

.shapes svg {
    width: 54px;
    height: 54px;
}

.lib-forms {
    height: 33px;
}

.lib-cut {
    margin-left: 2px;
    width: 186px;
    height: 16px;
    padding-top: 10px;
    align-items: flex-start;
    overflow: hidden;
    font-weight: 400;
}

.side-scroll {
    width: 13px;
    margin-left: 8px;
    display: flex;
    flex-direction: column;
    align-items: center;
}

.side-thumb {
    width: 13px;
    height: 597px;
    margin-top: 7px;
    background-color: #bbb;
    border: 1px solid #aaa;
}

.arrow-up,
.arrow-down,
.arrow-left,
.arrow-right {
    flex-shrink: 0;
    border: 4px solid transparent;
}

.arrow-up {
    margin-top: 5px;
    border-top: 0;
    border-bottom: 5px solid #aaa;
}

.arrow-down {
    margin-top: auto;
    margin-bottom: 6px;
    border-bottom: 0;
    border-top: 5px solid #444;
}

.arrow-left {
    border-left: 0;
    border-right: 5px solid #aaa;
}

.arrow-right {
    margin-left: auto;
    border-right: 0;
    border-left: 5px solid #555;
}

.side-foot {
    height: 28px;
    background-color: #235594;
    border-top: 1px solid #fff;
    display: flex;
    align-items: center;
    color: #a9d2f5;
    font-size: 12.500px;
    font-weight: 700;
}

.more-shapes {
    width: 144px;
    padding-left: 15px;
    margin-bottom: 3px;
}

.foot-btn {
    width: 31px;
    height: 26px;
    display: flex;
    align-items: center;
    justify-content: center;
    border-left: 1px solid #5d83b3;
}

.foot-btn svg {
    width: 18px;
    height: 20px;
}

.main {
    width: 1712px;
    padding-top: 8px;
    padding-left: 2px;
    display: flex;
    flex-direction: column;
}

.doc-head {
    height: 47px;
    background-color: #fff;
    border-radius: 4px 0 0 0;
    display: flex;
    align-items: center;
    padding: 0 20px 1px 13px;
}

.doc-title {
    margin-bottom: 2px;
    color: #111;
    font-size: 18px;
    font-weight: 700;
}

.doc-lock {
    width: 14px;
    height: 16px;
    margin-left: 5px;
}

.doc-saved {
    margin-left: auto;
    color: #777;
    font-size: 12px;
    font-style: italic;
}

.stage {
    height: 758px;
    display: flex;
}

.canvas {
    position: relative;
    flex: 1;
    overflow: hidden;
    background-color: #fff;
    background-image:
        linear-gradient(#e9e9fb 1px, transparent 1px),
        linear-gradient(90deg, #e9e9fb 1px, transparent 1px),
        linear-gradient(#f5f5fd 1px, transparent 1px),
        linear-gradient(90deg, #f5f5fd 1px, transparent 1px);
    background-size: 20px 20px, 20px 20px, 10px 10px, 10px 10px;
    background-position: 0 1px;
}

.vscroll {
    width: 17px;
    background-color: #fff;
    display: flex;
    flex-direction: column;
    align-items: center;
}

.v-thumb {
    width: 14px;
    height: 115px;
    margin-top: 5px;
    background-color: #bbb;
    border: 1px solid #aaa;
}

.hscroll {
    height: 17px;
    background-color: #f0f0f0;
    display: flex;
    align-items: center;
    padding: 0 19px 0 4px;
    background-image: linear-gradient(90deg, #f0f0f0 1693px, #fff 0);
}

.h-thumb {
    width: 561px;
    height: 13px;
    margin-left: 8px;
    background-color: #bbb;
    border: 1px solid #aaa;
}

.promo {
    height: 38px;
    background-color: #235594;
    display: flex;
    align-items: center;
    padding-left: 10px;
    font-size: 13.100px;
    font-weight: 700;
}

.promo-up {
    color: #f2f05a;
}

.promo-chev {
    width: 14px;
    height: 13px;
    margin-left: 9px;
}

.promo-days {
    margin-left: 17px;
    color: #f0f4f9;
    font-weight: 400;
}

/* wireframe shapes on the canvas */
.wire {
    position: absolute;
    border: 2px solid #bbb;
    background-color: #eee;
}

.wire-main {
    left: 146px;
    top: 36px;
    width: 402px;
    height: 581px;
}

.wire-second {
    left: 30px;
    top: 720px;
    width: 810px;
    height: 60px;
}

.wire-title {
    height: 30px;
    border-bottom: 2px solid #bbb;
    color: #666;
    font-size: 13.400px;
    line-height: 30px;
    text-align: center;
}

.wire-bar {
    height: 34px;
    display: flex;
    align-items: center;
    padding-left: 8px;
    color: #666;
}

.wire-nav {
    width: 18px;
    height: 18px;
    margin-right: 12px;
}

.wire-url {
    width: 51px;
    height: 25px;
    margin-left: 1px;
    background-color: #fff;
    border: 1px solid #bbb;
}

.wire-search {
    width: 201px;
    height: 25px;
    margin-left: 9px;
    background-color: #fff;
    border: 1px solid #bbb;
    padding: 3px 0 0 5px;
}

.wire-search svg {
    width: 18px;
    height: 18px;
    display: block;
}

.bands {
    position: relative;
    height: 513px;
    display: flex;
    flex-direction: column;
}

.band-green {
    height: 130px;
    background-color: #80ff80;
    border-top: 2px solid #5ce65c;
}

.band-lime {
    height: 127px;
    background-color: #e2ff7a;
}

.band-yellow {
    height: 127px;
    background-color: #ffff77;
    border-top: 6px solid #f3ff3d;
}

.band-orange {
    height: 129px;
    background-color: #ffc87a;
}

.contact {
    position: absolute;
    left: 38px;
    top: 65px;
    width: 224px;
}

.contact-title {
    height: 20px;
    margin-left: 3px;
    color: #119a2f;
    font-size: 16px;
    line-height: 20px;
}

.contact-label {
    margin-left: 5px;
    font-size: 13.500px;
    line-height: 16px;
}

.label-green {
    margin-top: 3px;
    color: #3cb94f;
}

.label-lime {
    margin-top: 7px;
    color: #9abd44;
}

.contact-input {
    width: 222px;
    height: 22px;
    border-radius: 3px;
}

.input-green {
    margin-top: 4px;
    border: 2px solid #62df62;
    border-bottom-color: #66e566;
}

.input-lime {
    margin-top: 4px;
    border: 2px solid #c6df60;
}

.date-label {
    margin-top: 14px;
    margin-left: 3px;
    color: #7f9a18;
    font-size: 12px;
    line-height: 14px;
}

.date-row {
    display: flex;
    align-items: center;
    height: 27px;
    margin-top: 5px;
    margin-left: 2px;
}

.date-box {
    height: 27px;
    border: 2px solid #c6df60;
    border-radius: 3px;
    color: #b0c84a;
    font-size: 13.500px;
    line-height: 22px;
    text-align: center;
}

.date-mm,
.date-dd {
    width: 35px;
}

.date-yy {
    width: 49px;
}

.date-sep {
    width: 14px;
    color: #c6df60;
    font-size: 15px;
    text-align: center;
}

.date-cal {
    width: 25px;
    height: 27px;
    margin-left: 4px;
}

.more-info {
    margin-top: 18px;
    margin-left: 3px;
    color: #9bb560;
    font-size: 14.200px;
    line-height: 16px;
    white-space: nowrap;
    display: flex;
    align-items: center;
}

.more-tri {
    margin-left: 10px;
    margin-top: 3px;
    border: 5px solid transparent;
    border-top: 8px solid #84a64f;
    border-bottom: 0;
}

.form-btn {
    width: 224px;
    height: 30px;
    border-radius: 3px;
    text-align: center;
    font-size: 13px;
    line-height: 26px;
}

.form-save {
    margin-top: 25px;
    background-color: #86a864;
    border: 2px solid #a3c071;
    color: #ffff88;
    font-weight: 700;
}

.form-cancel {
    margin-top: 10px;
    background-color: #dbdb5b;
    border: 2px solid #e2e25f;
    color: #a2a52d;
}

.flow-arrow {
    position: absolute;
    left: 182px;
    top: 80px;
    width: 34px;
    height: 483px;
}

.saved-msg {
    position: absolute;
    left: 679px;
    top: 89px;
    width: 267px;
    height: 30px;
    padding-left: 8px;
    background-color: #b5d7a8;
    border: 2px solid #38761d;
    border-radius: 3px;
    color: #3f6b37;
    font-size: 13.500px;
    line-height: 26px;
}

.report {
    position: absolute;
    left: 986px;
    top: 79px;
    width: 224px;
}

.report-title {
    margin-left: 4px;
    color: #222;
    font-size: 16px;
    line-height: 20px;
}

.report-label {
    margin: 18px 0 0 6px;
    color: #666;
    font-size: 14px;
    line-height: 16px;
}

.report-input {
    width: 222px;
    height: 23px;
    margin: 4px 0 0 1px;
    padding-left: 10px;
    background-color: #fff;
    border: 2px solid #bbb;
    border-radius: 4px;
    color: #222;
    font-size: 14.500px;
    line-height: 19px;
}

.link {
    color: #1155cc;
    text-decoration: underline;
}

.lookup {
    margin: 5px 0 0 5px;
    font-size: 12.400px;
    line-height: 14px;
    white-space: nowrap;
}

.lookup-note {
    color: #444;
    font-size: 10.200px;
}

.filters {
    margin: 23px 0 0 5px;
    font-size: 14px;
    line-height: 16px;
}

.report-rule {
    width: 220px;
    height: 2px;
    margin: 12px 0 0 1px;
    background-color: #bbb;
}

.run-btn {
    height: 29px;
    margin-top: 11px;
    background-color: #1155cc;
    border: 2px solid #6d9eeb;
    border-radius: 3px;
    color: #fff;
    font-size: 13px;
    font-weight: 700;
    line-height: 25px;
    text-align: center;
}

.more-opts {
    margin-top: 15px;
    font-size: 14px;
    line-height: 16px;
    text-align: center;
}

.back-link {
    margin: 47px 0 0 16px;
    color: #1155cc;
    font-size: 14.200px;
    line-height: 16px;
}

.data {
    position: absolute;
    left: 997px;
    top: 399px;
    width: 301px;
    height: 182px;
    border-collapse: collapse;
    table-layout: fixed;
    background-color: #fff;
    border: 2px solid #000;
}

.data th,
.data td {
    border: 2px solid #000;
    height: 30px;
    padding: 0;
}

.data th {
    background-color: #999;
    color: #222;
    font-size: 12px;
}

.data th:first-child {
    width: 88px;
}

.data th:nth-child(2) {
    width: 100px;
}

.data .th-first {
    text-align: left;
    padding-left: 9px;
}

.grey-box {
    position: absolute;
    left: 1321px;
    top: 81px;
    width: 372px;
    height: 515px;
    background-color: rgba(0, 0, 0, .29);
}

.spinner {
    position: absolute;
    left: 1477px;
    top: 263px;
    width: 80px;
    height: 80px;
}

/* windows taskbar */
.taskbar {
    height: 8px;
    background: linear-gradient(90deg, #bb8128 1067px, #c2a970 0, #c2a970 1703px, #c9982f 1740px);
    display: flex;
    padding-left: 308px;
}

.task {
    height: 8px;
    background-color: #cda05a;
    border: 1px solid #d8b680;
    border-bottom: 0;
}

.task-a {
    width: 58px;
}

.task-b {
    width: 58px;
    margin-left: 66px;
    background-color: #e5c79a;
}

.task-c {
    width: 59px;
    margin-left: 3px;
}

.task-d {
    width: 59px;
    margin-left: 189px;
}

.task-e {
    width: 60px;
    margin-left: 4px;
}

.task-f {
    width: 54px;
    margin-left: 2px;
}

.task-g {
    width: 57px;
    margin-left: 8px;
}

.task-h {
    width: 59px;
    margin-left: 4px;
}
```
